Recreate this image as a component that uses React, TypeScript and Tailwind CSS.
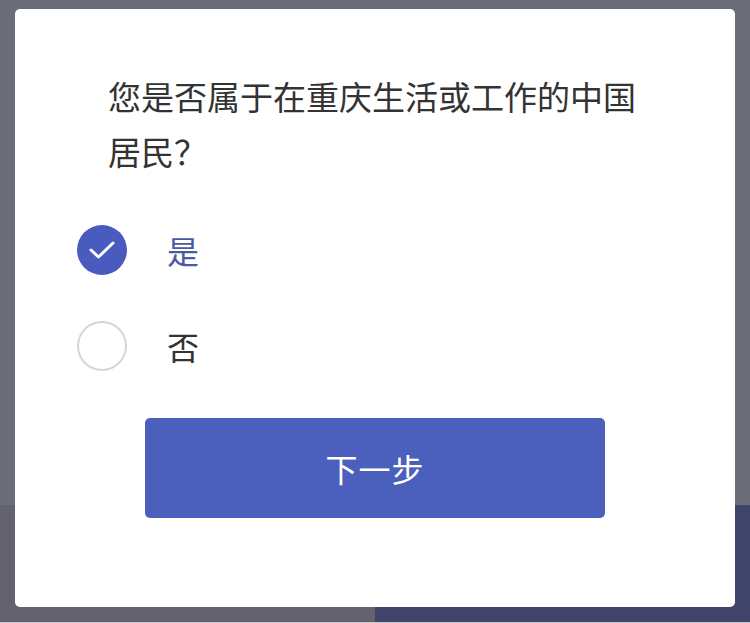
import React from "react";

export default function App() {
  return (
    <div
      className="relative w-[750px] h-[623px] overflow-hidden flex flex-col bg-[#6b6e78]"
      style={{ fontFamily: '"Noto Sans CJK SC", "Noto Sans", sans-serif' }}
    >
      <div className="flex-1 bg-[#6b6e78]" />
      <div className="h-[117px] flex">
        <div className="w-[375px] bg-[#62636f]" />
        <div className="flex-1 bg-[#40446a]" />
      </div>
      <div className="h-[1px] bg-[#c8c8cc]" />

      <div className="absolute left-[15px] top-[9px] w-[720px] h-[598px] bg-white rounded-[5px] flex flex-col">
        <div className="pl-[93px] pr-[85px] pt-[60px] text-[33px] leading-[55px] text-[#333333]">
          您是否属于在重庆生活或工作的中国居民？
        </div>

        <div className="mt-[46px] pl-[62px] flex flex-col gap-[46px]">
          <div className="flex items-center h-[50px]">
            <div className="w-[50px] h-[50px] rounded-full bg-[#4a5bbf] flex items-center justify-center">
              <svg width="50" height="50" viewBox="0 0 50 50">
                <path
                  d="M14 25 L21.5 32 L36 18"
                  fill="none"
                  stroke="white"
                  strokeWidth="3"
                  strokeLinecap="round"
                  strokeLinejoin="round"
                />
              </svg>
            </div>
            <span className="ml-[40px] text-[32px] leading-none text-[#4a58a8]">是</span>
          </div>
          <div className="flex items-center h-[50px]">
            <div className="w-[50px] h-[50px] rounded-full border-2 border-[#d6d6d6] bg-white" />
            <span className="ml-[40px] text-[32px] leading-none text-[#333333]">否</span>
          </div>
        </div>

        <div className="mt-[47px] pl-[130px]">
          <button className="w-[460px] h-[100px] rounded-[5px] bg-[#4b5fbd] text-white text-[32px] tracking-[1px] flex items-center justify-center">
            下一步
          </button>
        </div>
      </div>
    </div>
  );
}
